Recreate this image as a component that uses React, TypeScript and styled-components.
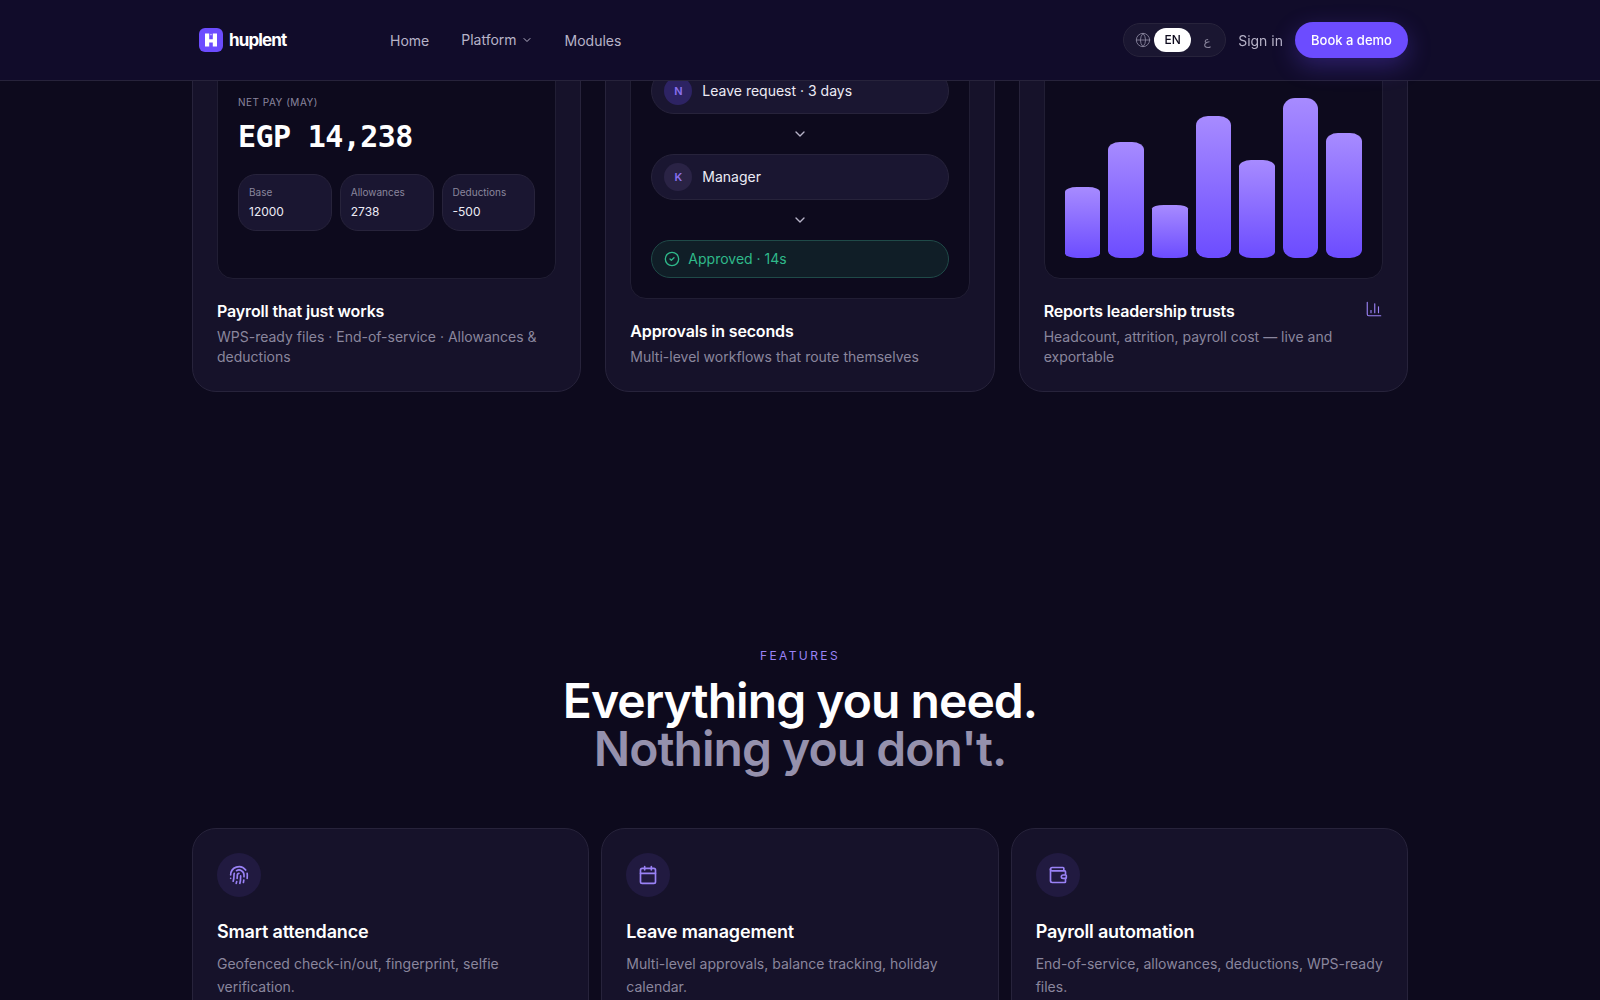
import React from "react";
import styled, { createGlobalStyle } from "styled-components";
import {
  Calendar,
  ChartColumn,
  ChevronDown,
  CircleCheck,
  Fingerprint,
  Globe,
  Wallet,
} from "lucide-react";

const colors = {
  page: "#0d0a1d",
  nav: "#110c2a",
  card: "#16122a",
  inset: "#0d0a1d",
  chip: "#1a1631",
  line: "#27233b",
  white: "#ffffff",
  text: "#ecebf5",
  muted: "#8a869d",
  navText: "#b7b3c8",
  violet: "#9a82f6",
  brand: "#6c4cff",
  green: "#2fb98a",
};

const bars = [40, 65, 30, 80, 55, 90, 70];

const pay = [
  { label: "Base", value: "12000" },
  { label: "Allowances", value: "2738" },
  { label: "Deductions", value: "-500" },
];

const features = [
  {
    icon: <Fingerprint size={20} />,
    title: "Smart attendance",
    text: "Geofenced check-in/out, fingerprint, selfie verification.",
  },
  {
    icon: <Calendar size={20} />,
    title: "Leave management",
    text: "Multi-level approvals, balance tracking, holiday calendar.",
  },
  {
    icon: <Wallet size={20} />,
    title: "Payroll automation",
    text: "End-of-service, allowances, deductions, WPS-ready files.",
  },
];

const App = () => {
  return (
    <Page>
      <GlobalStyle />
      <Nav>
        <NavInner>
          <Brand>
            <svg width="24" height="24" viewBox="0 0 24 24">
              <rect width="24" height="24" rx="6" fill={colors.brand} />
              <path d="M6 5.5h4.2v5.8h3.6V5.5H18v13h-4.2v-4h-3.6v4H6z" fill="#fff" />
              <circle cx="12" cy="6.6" r="0.8" fill="#fff" opacity="0.7" />
            </svg>
            <BrandName>huplent</BrandName>
          </Brand>
          <NavLinks>
            <NavLink>Home</NavLink>
            <NavMenu>
              Platform
              <ChevronDown size={12} />
            </NavMenu>
            <NavLink>Modules</NavLink>
          </NavLinks>
          <NavActions>
            <LangSwitch>
              <Globe size={16} strokeWidth={1.25} />
              <LangActive>EN</LangActive>
              <LangOption>ع</LangOption>
            </LangSwitch>
            <SignIn>Sign in</SignIn>
            <DemoButton>Book a demo</DemoButton>
          </NavActions>
        </NavInner>
      </Nav>

      <Container>
        <ProductRow>
          <ProductCard>
            <Preview>
              <div>
                <PayLabel>Net pay (May)</PayLabel>
                <PayAmount>EGP 14,238</PayAmount>
                <PayGrid>
                  {pay.map((item) => (
                    <PayItem key={item.label}>
                      <PayItemLabel>{item.label}</PayItemLabel>
                      <PayItemValue>{item.value}</PayItemValue>
                    </PayItem>
                  ))}
                </PayGrid>
              </div>
            </Preview>
            <CardHead>
              <CardTitle>Payroll that just works</CardTitle>
            </CardHead>
            <CardText>WPS-ready files · End-of-service · Allowances &amp; deductions</CardText>
          </ProductCard>

          <ProductCard>
            <Preview>
              <FlowStep>
                <Avatar $strong>N</Avatar>
                Leave request · 3 days
              </FlowStep>
              <FlowArrow>
                <ChevronDown size={16} />
              </FlowArrow>
              <FlowStep>
                <Avatar>K</Avatar>
                Manager
              </FlowStep>
              <FlowArrow>
                <ChevronDown size={16} />
              </FlowArrow>
              <FlowDone>
                <CircleCheck size={16} />
                Approved · 14s
              </FlowDone>
            </Preview>
            <CardHead>
              <CardTitle>Approvals in seconds</CardTitle>
            </CardHead>
            <CardText>Multi-level workflows that route themselves</CardText>
          </ProductCard>

          <ProductCard>
            <Preview>
              <Chart>
                {bars.map((pct, i) => (
                  <Bar key={i} $pct={pct} />
                ))}
              </Chart>
            </Preview>
            <CardHead>
              <CardTitle>Reports leadership trusts</CardTitle>
              <CardIcon>
                <ChartColumn size={18} strokeWidth={1.5} />
              </CardIcon>
            </CardHead>
            <CardText>Headcount, attrition, payroll cost — live and exportable</CardText>
          </ProductCard>
        </ProductRow>

        <Features>
          <Eyebrow>Features</Eyebrow>
          <Heading>
            Everything you need.
            <HeadingMuted>Nothing you don't.</HeadingMuted>
          </Heading>
          <FeatureGrid>
            {features.map((feature) => (
              <FeatureCard key={feature.title}>
                <FeatureIcon>{feature.icon}</FeatureIcon>
                <FeatureTitle>{feature.title}</FeatureTitle>
                <FeatureText>{feature.text}</FeatureText>
              </FeatureCard>
            ))}
          </FeatureGrid>
        </Features>
      </Container>
    </Page>
  );
};

export default App;

const GlobalStyle = createGlobalStyle`
  * {
    box-sizing: border-box;
  }

  html,
  body {
    margin: 0;
    height: 100%;
    overflow: hidden;
    background: ${colors.page};
  }

  body {
    font-family: Inter, "Noto Sans", "DejaVu Sans", sans-serif;
    color: ${colors.text};
  }
`;

const Page = styled.div`
  height: 100vh;
  overflow: hidden;
  background: ${colors.page};
`;

const Nav = styled.header`
  position: fixed;
  top: 0;
  left: 0;
  right: 0;
  z-index: 10;
  height: 81px;
  background: ${colors.nav};
  border-bottom: 1px solid ${colors.line};
`;

const NavInner = styled.div`
  width: 1216px;
  height: 80px;
  margin: 0 auto;
  display: flex;
  align-items: center;
`;

const Brand = styled.div`
  display: flex;
  align-items: center;
  gap: 6px;
  margin-left: 7px;
`;

const BrandName = styled.span`
  font-size: 17px;
  font-weight: 700;
  letter-spacing: -0.05em;
  line-height: 24px;
  color: ${colors.white};
`;

const NavLinks = styled.nav`
  display: flex;
  align-items: center;
  gap: 32px;
  margin-left: 103.5px;
  font-size: 14px;
  color: ${colors.navText};
`;

const NavLink = styled.a`
  line-height: 20px;
  margin-top: 2px;
`;

const NavMenu = styled.button`
  display: flex;
  align-items: center;
  gap: 4px;
  padding: 0;
  border: 0;
  background: none;
  font: inherit;
  line-height: 20px;
  color: ${colors.navText};
`;

const NavActions = styled.div`
  display: flex;
  align-items: center;
  gap: 12px;
  margin-left: auto;
`;

const LangSwitch = styled.div`
  display: flex;
  align-items: center;
  gap: 3px;
  width: 103px;
  height: 34px;
  padding: 0 5px 0 11px;
  border: 1px solid ${colors.line};
  border-radius: 999px;
  background: ${colors.chip};
  color: #8e8aa2;
`;

const LangActive = styled.span`
  width: 37px;
  height: 24px;
  border-radius: 999px;
  background: ${colors.white};
  color: ${colors.page};
  font-size: 12px;
  font-weight: 500;
  line-height: 24px;
  text-align: center;
`;

const LangOption = styled.span`
  flex: 1;
  font-size: 12px;
  color: ${colors.muted};
  text-align: center;
`;

const SignIn = styled.a`
  font-size: 14px;
  color: ${colors.navText};
`;

const DemoButton = styled.button`
  width: 113px;
  height: 36px;
  padding: 0;
  border: 0;
  border-radius: 999px;
  background: ${colors.brand};
  box-shadow: 0 8px 24px rgba(108, 76, 255, 0.3);
  color: ${colors.white};
  font: inherit;
  font-size: 13px;
  font-weight: 500;
`;

const Container = styled.main`
  width: 1216px;
  margin: 0 auto;
`;

const ProductRow = styled.section`
  display: grid;
  grid-template-columns: repeat(3, 1fr);
  gap: 24px;
  padding-top: 22px;
`;

const ProductCard = styled.article`
  display: flex;
  flex-direction: column;
  padding: 24px;
  border: 1px solid ${colors.line};
  border-radius: 24px;
  background: ${colors.card};
`;

const Preview = styled.div`
  flex: 1;
  display: flex;
  flex-direction: column;
  justify-content: center;
  padding: 20px;
  border: 1px solid #211e34;
  border-radius: 16px;
  background: ${colors.inset};
`;

const PayLabel = styled.div`
  font-size: 10px;
  line-height: 15px;
  letter-spacing: 0.05em;
  text-transform: uppercase;
  color: ${colors.muted};
`;

const PayAmount = styled.div`
  margin-top: 9px;
  font-family: "DejaVu Sans Mono", monospace;
  font-size: 30px;
  font-weight: 700;
  line-height: 36px;
  letter-spacing: -0.02em;
  color: ${colors.white};
`;

const PayGrid = styled.div`
  display: grid;
  grid-template-columns: repeat(3, 1fr);
  gap: 8px;
  margin-top: 19px;
`;

const PayItem = styled.div`
  padding: 10px 10px 9px;
  border: 1px solid ${colors.line};
  border-radius: 18px;
  background: ${colors.chip};
`;

const PayItemLabel = styled.div`
  font-size: 10px;
  line-height: 15px;
  color: ${colors.muted};
`;

const PayItemValue = styled.div`
  margin-top: 3px;
  font-size: 12px;
  line-height: 18px;
  color: ${colors.text};
`;

const FlowStep = styled.div`
  display: flex;
  align-items: center;
  gap: 10px;
  height: 46px;
  padding: 0 12px 1px;
  border: 1px solid ${colors.line};
  border-radius: 999px;
  background: ${colors.chip};
  font-size: 14px;
  color: ${colors.text};
`;

const Avatar = styled.span<{ $strong?: boolean }>`
  display: grid;
  place-items: center;
  width: 28px;
  height: 28px;
  border-radius: 50%;
  background: ${({ $strong }) => ($strong ? "#2d2363" : "#2a2345")};
  color: #8a70ee;
  font-size: 11px;
  font-weight: 600;
`;

const FlowArrow = styled.div`
  display: flex;
  justify-content: center;
  padding: 12px 0;
  color: ${colors.navText};
`;

const FlowDone = styled.div`
  display: flex;
  align-items: center;
  gap: 8px;
  height: 38px;
  padding: 0 12px 1px;
  border: 1px solid #1f4a48;
  border-radius: 999px;
  background: #101e27;
  font-size: 14px;
  color: ${colors.green};
`;

const Chart = styled.div`
  display: flex;
  align-items: flex-end;
  gap: 8px;
  height: 178px;
  margin-top: auto;
`;

const Bar = styled.div<{ $pct: number }>`
  flex: 1;
  height: ${({ $pct }) => $pct}%;
  border-radius: 12px / ${({ $pct }) => (12 * $pct) / 100}px;
  background: linear-gradient(180deg, #a78bff 0%, #6c4cff 100%);
`;

const CardHead = styled.div`
  display: flex;
  justify-content: space-between;
  margin-top: 20px;
`;

const CardTitle = styled.h3`
  margin: 0;
  font-size: 16px;
  font-weight: 600;
  line-height: 24px;
  letter-spacing: -0.01em;
  color: ${colors.white};
`;

const CardIcon = styled.span`
  margin-top: 1px;
  height: 18px;
  color: ${colors.violet};
`;

const CardText = styled.p`
  margin: 4px 0 0;
  font-size: 14px;
  line-height: 20px;
  color: ${colors.muted};
`;

const Features = styled.section`
  padding-top: 256px;
  text-align: center;
`;

const Eyebrow = styled.div`
  font-size: 12px;
  line-height: 16px;
  letter-spacing: 0.2em;
  text-transform: uppercase;
  color: ${colors.violet};
`;

const Heading = styled.h2`
  margin: 13px 0 0;
  font-size: 48px;
  font-weight: 600;
  line-height: 48px;
  letter-spacing: -0.02em;
  color: ${colors.white};
`;

const HeadingMuted = styled.span`
  display: block;
  color: #9591ad;
`;

const FeatureGrid = styled.div`
  display: grid;
  grid-template-columns: repeat(3, 1fr);
  gap: 12px;
  margin-top: 55px;
  text-align: left;
`;

const FeatureCard = styled.article`
  padding: 24px;
  border: 1px solid ${colors.line};
  border-radius: 24px;
  background: ${colors.card};
`;

const FeatureIcon = styled.div`
  display: grid;
  place-items: center;
  width: 44px;
  height: 44px;
  border-radius: 50%;
  background: #211a40;
  color: ${colors.violet};
`;

const FeatureTitle = styled.h3`
  margin: 21px 0 0;
  font-size: 18px;
  font-weight: 600;
  line-height: 28px;
  letter-spacing: -0.01em;
  color: ${colors.white};
`;

const FeatureText = styled.p`
  margin: 7px 0 0;
  font-size: 14px;
  line-height: 22.75px;
  color: ${colors.muted};
`;
